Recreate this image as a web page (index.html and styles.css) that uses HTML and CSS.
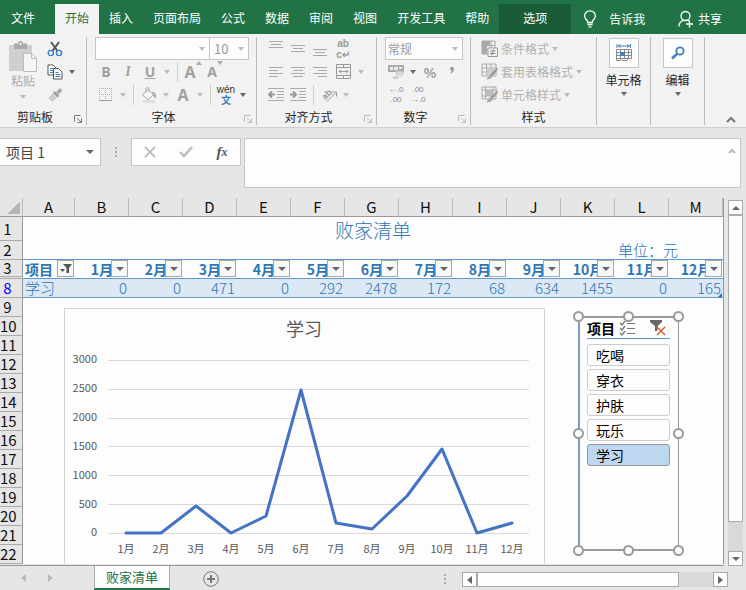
FILE: index.html
```html
<!DOCTYPE html>
<html lang="zh-CN">
<head>
    <meta charset="UTF-8">
    <title>败家清单</title>
    <link rel="stylesheet" href="styles.css">
</head>
<body>
    <div class="app">
        <nav class="tabs">
            <a class="tab file" href="#">文件</a>
            <a class="tab active" href="#">开始</a>
            <a class="tab" href="#">插入</a>
            <a class="tab" href="#">页面布局</a>
            <a class="tab" href="#">公式</a>
            <a class="tab" href="#">数据</a>
            <a class="tab" href="#">审阅</a>
            <a class="tab" href="#">视图</a>
            <a class="tab" href="#">开发工具</a>
            <a class="tab" href="#">帮助</a>
            <a class="tab context" href="#">选项</a>
            <a class="tell" href="#">
                <svg width="14" height="18" viewBox="0 0 14 18" fill="none" stroke="#fff" stroke-width="1.3"><path d="M4.5 12.5V11C3 9.500 1.600 8 1.600 6a5.400 5.200 0 0 1 10.800 0c0 2-1.400 3.500-2.900 5v1.500zM4.500 14.500h5M5.500 16.800h3"/></svg>
                告诉我
            </a>
            <a class="share" href="#">
                <svg width="16" height="18" viewBox="0 0 16 18" fill="none" stroke="#fff" stroke-width="1.300"><circle cx="7.500" cy="6" r="4.500"/><path d="M1 16.500c0-3.500 2-5.500 4.500-6.200M9.500 10.200l1.500 1M8 14h7M11.500 10.500v7"/></svg>
                共享
            </a>
        </nav>

        <div class="ribbon">
            <section class="group">
                <div class="clip">
                    <button class="paste" disabled>
                        <svg width="30" height="32" viewBox="0 0 30 32"><path d="M1 4h23v26H1z" fill="#d0cfd0"/><path d="M6 2.500h4a2.500 2.500 0 0 1 5 0h4V8H6z" fill="#aaa"/><circle cx="12.500" cy="3" r="1.200" fill="#f1f1f1"/><path d="M15.500 12.500h8l5 5v13h-13z" fill="#f6f6f6" stroke="#bbb"/><path d="M23.500 12.500v5h5" fill="none" stroke="#bbb"/></svg>
                        粘贴
                        <i class="caret pale"></i>
                    </button>
                    <div class="rows">
                        <div class="row"><button class="tool" aria-label="剪切"><svg width="16" height="16" viewBox="0 0 16 16" fill="none"><path d="M4 1l6.500 9M12 1L5.500 10" stroke="#555" stroke-width="2"/><circle cx="3.800" cy="12" r="2.600" stroke="#3f7fbf" stroke-width="1.400"/><circle cx="12" cy="12" r="2.600" stroke="#3f7fbf" stroke-width="1.400"/></svg></button></div>
                        <div class="row"><button class="tool" aria-label="复制"><svg width="16" height="16" viewBox="0 0 16 16" fill="none"><path d="M1 1h5l3 3v7H1z" fill="#fff" stroke="#555"/><path d="M3 4.500h3M3 6.500h3M3 8.500h3" stroke="#3f7fbf"/><path d="M6.500 4.500h5l3.500 3.500v7H6.500z" fill="#fff" stroke="#555"/><path d="M8.500 8.500h3M8.500 10.500h5M8.500 12.500h5" stroke="#3f7fbf"/></svg></button><button class="drop" aria-label="复制选项"><i class="caret"></i></button></div>
                        <div class="row"><button class="tool" aria-label="格式刷" disabled><svg width="16" height="16" viewBox="0 0 16 16"><path d="M13 1l2.500 2.500-4 4L9 5z" fill="#aaa"/><path d="M7.500 4l5 5-2 1.500-4.500-4.500z" fill="#999"/><path d="M5.500 6.500l4.500 4.500c-2 1.500-3.500 3-4.500 4L1 11C3 9.500 4.500 8 5.500 6.500z" fill="#ccc"/></svg></button></div>
                    </div>
                </div>
                <div class="caption"><span>剪贴板</span><button class="launch" aria-label="剪贴板设置"><svg width="8" height="8" viewBox="0 0 8 8" fill="none" stroke="#777"><path d="M.5 6.500v-6h6M3 3l4 4M7.500 3.500v4h-4"/></svg></button></div>
            </section>

            <section class="group">
                <div class="rows">
                    <div class="row">
                        <div class="combo font-name"><input type="text" aria-label="字体" disabled><i class="caret pale"></i></div>
                        <div class="combo font-size"><input type="text" aria-label="字号" value="10" disabled><i class="caret pale"></i></div>
                    </div>
                    <div class="row">
                        <button class="tool letter bold" disabled>B</button>
                        <button class="tool letter italic" disabled>I</button>
                        <button class="tool letter under" disabled>U</button>
                        <button class="drop" aria-label="下划线" disabled><i class="caret pale"></i></button>
                        <i class="sep"></i>
                        <button class="tool letter big" aria-label="增大字号" disabled>A<svg width="6" height="4" viewBox="0 0 6 4"><path d="M0 4l3-4 3 4z" fill="#aaa"/></svg></button>
                        <button class="tool letter" aria-label="减小字号" disabled>A<svg width="6" height="4" viewBox="0 0 6 4"><path d="M0 0l3 4 3-4z" fill="#aaa"/></svg></button>
                    </div>
                    <div class="row">
                        <button class="tool" aria-label="边框" disabled><svg width="14" height="14" viewBox="0 0 14 14" fill="none" stroke="#aaa"><path d="M.5 0v12M6.500 0v12M12.500 0v12M0 .5h13M0 6.500h13" stroke-dasharray="1 1"/><path d="M0 12.500h13" stroke="#999"/></svg></button>
                        <button class="drop" aria-label="边框选项" disabled><i class="caret pale"></i></button>
                        <i class="sep"></i>
                        <button class="tool" aria-label="填充颜色" disabled><svg width="16" height="16" viewBox="0 0 16 16" fill="none" stroke="#aaa"><path d="M6.500 2.500l6 5-5.500 5.500-5.500-5z" fill="#f6f6f6"/><path d="M5 6V2a1.500 1.500 0 0 1 3 0v3"/><path d="M11.500 5c3 1 3.500 3 3 6-1-1-2-2-2-3.500z" fill="#aaa"/><path d="M2 14.500h12" stroke="#ddd" stroke-width="3"/></svg></button>
                        <button class="drop" aria-label="填充选项" disabled><i class="caret pale"></i></button>
                        <button class="tool letter big" aria-label="字体颜色" disabled>A</button>
                        <button class="drop" aria-label="颜色选项" disabled><i class="caret pale"></i></button>
                        <i class="sep"></i>
                        <button class="tool pinyin" aria-label="拼音指南"><span>wén</span><b>文</b></button>
                        <button class="drop" aria-label="拼音选项"><i class="caret"></i></button>
                    </div>
                </div>
                <div class="caption"><span>字体</span><button class="launch" aria-label="字体设置"><svg width="8" height="8" viewBox="0 0 8 8" fill="none" stroke="#bbb"><path d="M.5 6.500v-6h6M3 3l4 4M7.500 3.500v4h-4"/></svg></button></div>
            </section>

            <section class="group">
                <div class="rows">
                    <div class="row">
                        <button class="tool" aria-label="顶端对齐" disabled><svg width="14" height="16" viewBox="0 0 14 16" stroke="#aaa"><path d="M0 .5h14M2 3.500h10M0 6.500h14"/></svg></button>
                        <button class="tool" aria-label="垂直居中" disabled><svg width="14" height="16" viewBox="0 0 14 16" stroke="#aaa"><path d="M0 4.500h14M2 7.500h10M0 10.500h14"/></svg></button>
                        <button class="tool" aria-label="底端对齐" disabled><svg width="14" height="16" viewBox="0 0 14 16" stroke="#aaa"><path d="M0 8.500h14M2 11.500h10M0 14.500h14"/></svg></button>
                        <button class="tool wide wrap" aria-label="自动换行" disabled><span>ab</span><span>c↵</span></button>
                    </div>
                    <div class="row">
                        <button class="tool" aria-label="左对齐" disabled><svg width="14" height="12" viewBox="0 0 14 12" stroke="#aaa"><path d="M0 1.500h14M0 4.500h9M0 7.500h14M0 10.500h9"/></svg></button>
                        <button class="tool" aria-label="居中" disabled><svg width="14" height="12" viewBox="0 0 14 12" stroke="#aaa"><path d="M0 1.500h14M2 4.500h10M0 7.500h14M2 10.500h10"/></svg></button>
                        <button class="tool" aria-label="右对齐" disabled><svg width="14" height="12" viewBox="0 0 14 12" stroke="#aaa"><path d="M0 1.500h14M5 4.500h9M0 7.500h14M5 10.500h9"/></svg></button>
                        <button class="tool wide" aria-label="合并" disabled><svg width="15" height="15" viewBox="0 0 15 15" fill="none" stroke="#999"><path d="M.5.500h14v14H.5zM.5 3.500h14M.5 11.500h14M7.500.500v3M7.500 11.500v3M3 7.500h9M5 5.500l-2 2 2 2M10 5.500l2 2-2 2"/></svg></button>
                        <button class="drop" aria-label="合并选项" disabled><i class="caret pale"></i></button>
                    </div>
                    <div class="row">
                        <button class="tool" aria-label="减少缩进" disabled><svg width="16" height="14" viewBox="0 0 16 14" fill="none" stroke="#aaa"><path d="M0 .5h16M9 3.500h7M9 6.500h7M9 9.500h7M0 12.500h16"/><path d="M1 6.500h6M4 3.500l-3 3 3 3" stroke="#999" stroke-width="2"/></svg></button>
                        <button class="tool" aria-label="增加缩进" disabled><svg width="16" height="14" viewBox="0 0 16 14" fill="none" stroke="#aaa"><path d="M0 .5h16M9 3.500h7M9 6.500h7M9 9.500h7M0 12.500h16"/><path d="M0 6.500h6M3 3.500l3 3-3 3" stroke="#999" stroke-width="2"/></svg></button>
                        <i class="sep"></i>
                        <button class="tool" aria-label="方向" disabled><svg class="slanted" width="17" height="17" viewBox="0 0 17 17" fill="none" stroke="#999"><text x="0" y="12" class="tilt" transform="rotate(-45 5 8)">ab</text><path d="M6 15.500l9-9M11 6h4.500v4.500"/></svg></button>
                        <button class="drop" aria-label="方向选项" disabled><i class="caret pale"></i></button>
                    </div>
                </div>
                <div class="caption"><span>对齐方式</span><button class="launch" aria-label="对齐设置"><svg width="8" height="8" viewBox="0 0 8 8" fill="none" stroke="#bbb"><path d="M.5 6.500v-6h6M3 3l4 4M7.500 3.500v4h-4"/></svg></button></div>
            </section>

            <section class="group">
                <div class="rows">
                    <div class="row">
                        <div class="combo format"><input type="text" aria-label="数字格式" value="常规" disabled><i class="caret pale"></i></div>
                    </div>
                    <div class="row">
                        <button class="tool" aria-label="货币" disabled><svg width="16" height="16" viewBox="0 0 16 16"><path d="M0 1h16v7H0z" fill="#aaa"/><path d="M2 3h3v3H2zM11 3h3v2h-3z" fill="#eee"/><circle cx="8" cy="4.500" r="2" fill="#eee"/><ellipse cx="11.500" cy="8.500" rx="4" ry="1.500" fill="#ddd" stroke="#bbb"/><ellipse cx="11.500" cy="11" rx="4" ry="1.500" fill="#ddd"/><ellipse cx="7.500" cy="13.500" rx="3" ry="1.500" fill="#ccc"/></svg></button>
                        <button class="drop" aria-label="货币选项"><i class="caret"></i></button>
                        <button class="tool letter percent" disabled>%</button>
                        <button class="tool" aria-label="千位分隔" disabled><svg width="6" height="12" viewBox="0 0 6 12"><path d="M1 2.500a2 2 0 1 1 4 .5c0 2-1.500 4-3 4.500l-.500-1C2.500 6 3 5.200 3 4.500 1.800 4.500 1 3.800 1 2.500z" fill="#999"/></svg></button>
                    </div>
                    <div class="row">
                        <button class="tool digits" aria-label="增加小数位" disabled><span>←.0</span><span>.00</span></button>
                        <button class="tool digits" aria-label="减少小数位" disabled><span>.00</span><span>→.0</span></button>
                    </div>
                </div>
                <div class="caption"><span>数字</span><button class="launch" aria-label="数字设置"><svg width="8" height="8" viewBox="0 0 8 8" fill="none" stroke="#bbb"><path d="M.5 6.500v-6h6M3 3l4 4M7.500 3.500v4h-4"/></svg></button></div>
            </section>

            <section class="group">
                <div class="rows">
                    <div class="row"><button class="style" disabled><svg width="17" height="17" viewBox="0 0 17 17" fill="none"><path d="M1 1h13v13H1zM1 5.500h13M1 10h13M5.500 1v13M10 1v13" stroke="#aaa"/><path d="M1 1h8v4H1zM1 6h4v4H1zM1 10h5v4H1z" fill="#aaa"/><path d="M7 8h9.500v8.500H7z" fill="#f6f6f6" stroke="#999"/><path d="M9 11h5.500M9 13.500h5.500M13 9.500l-2.500 6" stroke="#888"/></svg>条件格式<i class="caret pale"></i></button></div>
                    <div class="row"><button class="style" disabled><svg width="17" height="17" viewBox="0 0 17 17" fill="none"><path d="M1 1h14v12H1zM1 5h14M1 9h14M5.500 1v12M10 1v12" stroke="#aaa"/><path d="M5.500 5H15v8H5.500z" fill="#ccc"/><path d="M16.500 4v3l-5 6-2.500-1z" fill="#999"/><path d="M9 11.500l2.500 2c-1 2.500-3 3-6.500 2.500 2-1 2.500-3 4-4.500z" fill="#aaa"/></svg>套用表格格式<i class="caret pale"></i></button></div>
                    <div class="row"><button class="style" disabled><svg width="17" height="17" viewBox="0 0 17 17" fill="none"><path d="M1 1h14v12H1zM1 4h14M1 10h14M4.500 1v12M12 1v12" stroke="#aaa"/><path d="M4.500 4H12v6H4.500z" fill="#bbb"/><path d="M16.500 4v3l-5 6-2.500-1z" fill="#999"/><path d="M9 11.500l2.500 2c-1 2.500-3 3-6.500 2.500 2-1 2.500-3 4-4.500z" fill="#aaa"/></svg>单元格样式<i class="caret pale"></i></button></div>
                </div>
                <div class="caption"><span>样式</span></div>
            </section>

            <section class="group">
                <button class="large">
                    <span class="box"><svg width="16" height="18" viewBox="0 0 16 18" fill="none"><path d="M1 0v4M14.500 0v4M2 2h12M4.500.500L2.500 2l2 1.500M11 .5L13 2l-2 1.500" stroke="#3f7fbf"/><path d="M.5 5.500h15v9H.5zM.5 8.500h15M.5 11.500h15M4.500 5.500v9M8.500 5.500v9M12.500 5.500v9M.5 14.500v2h4l1-2M6 16.500h5l1-2" stroke="#888"/><path d="M4 8h5v4H4z" fill="#3f7fbf"/></svg></span>
                    单元格
                    <i class="caret"></i>
                </button>
            </section>

            <section class="group">
                <button class="large">
                    <span class="box"><svg width="14" height="14" viewBox="0 0 14 14" fill="none" stroke="#3f7fbf"><circle cx="9" cy="5" r="3.700" stroke-width="1.800"/><path d="M6 8l-5 4.500" stroke-width="2.500"/></svg></span>
                    编辑
                    <i class="caret"></i>
                </button>
            </section>

            <div class="fold">
                <button aria-label="折叠功能区"><svg width="10" height="7" viewBox="0 0 10 7" fill="none" stroke="#777" stroke-width="2"><path d="M1 6l4-4 4 4"/></svg></button>
            </div>
        </div>

        <div class="formula-bar">
            <div class="name-box"><input type="text" aria-label="名称框" value="项目 1"><i class="caret large-caret"></i></div>
            <i class="dots"></i>
            <div class="fx">
                <button aria-label="取消"><svg width="12" height="12" viewBox="0 0 12 12" stroke="#bbb" stroke-width="1.800"><path d="M1 1l10 10M11 1L1 11"/></svg></button>
                <button aria-label="输入"><svg width="14" height="12" viewBox="0 0 14 12" fill="none" stroke="#bbb" stroke-width="2.400"><path d="M1 6l4 4 8-9"/></svg></button>
                <button class="fn">f<small>x</small></button>
            </div>
            <div class="formula">
                <textarea aria-label="编辑栏"></textarea>
                <svg width="8" height="6" viewBox="0 0 8 6" fill="none" stroke="#bbb" stroke-width="2"><path d="M1 5l3-3 3 3"/></svg>
            </div>
        </div>

        <main class="workspace">
            <div class="sheet">
                <table>
                    <colgroup><col class="col-head"><col class="col-a"><col span="12"></colgroup>
                    <thead>
                        <tr><th class="corner"></th><th>A</th><th>B</th><th>C</th><th>D</th><th>E</th><th>F</th><th>G</th><th>H</th><th>I</th><th>J</th><th>K</th><th>L</th><th>M</th></tr>
                    </thead>
                    <tbody>
                        <tr class="title"><th>1</th><td colspan="13">败家清单</td></tr>
                        <tr class="unit"><th>2</th><td colspan="11"></td><td colspan="2">单位：元</td></tr>
                        <tr class="months">
                            <th class="before-hidden">3</th>
                            <td>项目<button class="filter" aria-label="筛选项目"><svg width="12" height="10" viewBox="0 0 12 10"><path d="M3 0h9L9 4v5H6.500V4z" fill="#555"/><path d="M0 5h5L2.500 8z" fill="#555"/></svg></button></td>
                            <td>1月<button class="filter" aria-label="筛选1月"><i class="caret large-caret"></i></button></td>
                            <td>2月<button class="filter" aria-label="筛选2月"><i class="caret large-caret"></i></button></td>
                            <td>3月<button class="filter" aria-label="筛选3月"><i class="caret large-caret"></i></button></td>
                            <td>4月<button class="filter" aria-label="筛选4月"><i class="caret large-caret"></i></button></td>
                            <td>5月<button class="filter" aria-label="筛选5月"><i class="caret large-caret"></i></button></td>
                            <td>6月<button class="filter" aria-label="筛选6月"><i class="caret large-caret"></i></button></td>
                            <td>7月<button class="filter" aria-label="筛选7月"><i class="caret large-caret"></i></button></td>
                            <td>8月<button class="filter" aria-label="筛选8月"><i class="caret large-caret"></i></button></td>
                            <td>9月<button class="filter" aria-label="筛选9月"><i class="caret large-caret"></i></button></td>
                            <td>10月<button class="filter" aria-label="筛选10月"><i class="caret large-caret"></i></button></td>
                            <td>11月<button class="filter" aria-label="筛选11月"><i class="caret large-caret"></i></button></td>
                            <td>12月<button class="filter" aria-label="筛选12月"><i class="caret large-caret"></i></button></td>
                        </tr>
                        <tr class="data"><th>8</th><td>学习</td><td>0</td><td>0</td><td>471</td><td>0</td><td>292</td><td>2478</td><td>172</td><td>68</td><td>634</td><td>1455</td><td>0</td><td class="last">165</td></tr>
                        <tr><th>9</th><td colspan="13"></td></tr>
                        <tr><th>10</th><td colspan="13"></td></tr>
                        <tr><th>11</th><td colspan="13"></td></tr>
                        <tr><th>12</th><td colspan="13"></td></tr>
                        <tr><th>13</th><td colspan="13"></td></tr>
                        <tr><th>14</th><td colspan="13"></td></tr>
                        <tr><th>15</th><td colspan="13"></td></tr>
                        <tr><th>16</th><td colspan="13"></td></tr>
                        <tr><th>17</th><td colspan="13"></td></tr>
                        <tr><th>18</th><td colspan="13"></td></tr>
                        <tr><th>19</th><td colspan="13"></td></tr>
                        <tr><th>20</th><td colspan="13"></td></tr>
                        <tr><th>21</th><td colspan="13"></td></tr>
                        <tr><th>22</th><td colspan="13"></td></tr>
                    </tbody>
                </table>

                <!-- objects floating over the cells -->
                <svg class="chart" width="481" height="256" viewBox="0 0 481 256">
                    <rect x="0.5" y="0.5" width="480" height="280" fill="#fdfdfd" stroke="#d4d4d4"/>
                    <text class="chart-title" x="240" y="28">学习</text>
                    <path class="gridlines" d="M44 52.500h421M44 81.500h421M44 110.500h421M44 138.500h421M44 167.500h421M44 196.500h421M44 225.500h421"/>
                    <g class="y-axis">
                        <text x="33" y="55">3000</text><text x="33" y="84">2500</text><text x="33" y="113">2000</text><text x="33" y="142">1500</text><text x="33" y="171">1000</text><text x="33" y="200">500</text><text x="33" y="228">0</text>
                    </g>
                    <g class="x-axis">
                        <text x="62" y="245">1月</text><text x="97" y="245">2月</text><text x="132" y="245">3月</text><text x="167" y="245">4月</text><text x="202" y="245">5月</text><text x="237" y="245">6月</text><text x="272" y="245">7月</text><text x="308" y="245">8月</text><text x="343" y="245">9月</text><text x="378" y="245">10月</text><text x="413" y="245">11月</text><text x="448" y="245">12月</text>
                    </g>
                    <polyline class="series" points="62,225 97,225 132,198 167,225 202,208 237,82 272,215 308,221 343,188 378,141 413,225 448,215"/>
                </svg>

                <div class="slicer">
                    <div class="slicer-head">
                        <b>项目</b>
                        <button aria-label="多选"><svg width="17" height="15" viewBox="0 0 17 15" fill="none" stroke="#777"><path d="M1 2l2 2 3-4M1 7l2 2 3-4M1 12l2 2 3-4" stroke-width="1.300"/><path d="M8 2.500h8M8 7.500h8M8 12.500h8"/></svg></button>
                        <button class="clear" aria-label="清除筛选器"><svg width="16" height="16" viewBox="0 0 16 16" fill="none"><path d="M0 0h12v2L7.500 6v5H5V6L0 2z" fill="#666"/><path d="M7 7l8 8M15 7l-8 8" stroke="#d9532c" stroke-width="1.400"/></svg></button>
                    </div>
                    <button class="item">吃喝</button>
                    <button class="item">穿衣</button>
                    <button class="item">护肤</button>
                    <button class="item">玩乐</button>
                    <button class="item selected">学习</button>
                    <i class="grip top left"></i><i class="grip top mid"></i><i class="grip top right"></i>
                    <i class="grip center left"></i><i class="grip center right"></i>
                    <i class="grip base left"></i><i class="grip base mid"></i><i class="grip base right"></i>
                </div>
            </div>

            <div class="v-scroll">
                <button aria-label="向上"><i class="caret up"></i></button>
                <div class="thumb"></div>
                <div class="track"></div>
                <button aria-label="向下"><i class="caret large-caret"></i></button>
            </div>
        </main>

        <footer class="bottom-bar">
            <div class="sheet-nav">
                <button aria-label="上一张"><i class="caret back pale"></i></button>
                <button aria-label="下一张"><i class="caret next pale"></i></button>
            </div>
            <a class="sheet-tab" href="#">败家清单</a>
            <button class="add" aria-label="新工作表"><svg width="16" height="16" viewBox="0 0 16 16" fill="none" stroke="#777"><circle cx="8" cy="8" r="7.300"/><path d="M4 8h8M8 4v8" stroke-width="2"/></svg></button>
            <i class="dots"></i>
            <div class="h-scroll">
                <button aria-label="向左"><i class="caret back"></i></button>
                <div class="thumb"></div>
                <div class="track"></div>
                <button aria-label="向右"><i class="caret next"></i></button>
            </div>
        </footer>
    </div>
</body>
</html>
```
FILE: styles.css
```css
*{
    box-sizing: border-box;
    margin: 0;
    padding: 0;
}

body {
    background-color: #e6e6e6;
    font-family: "Noto Sans CJK SC", sans-serif;
    font-size: 12px;
    line-height: 16px;
    color: #262626;
}

button,
input,
textarea {
    font: inherit;
    color: inherit;
    border: none;
    background: none;
    outline: none;
}

button {
    display: flex;
    align-items: center;
    justify-content: center;
}

a {
    color: white;
    text-decoration: none;
}

svg {
    display: block;
    flex: none;
}

.app {
    display: flex;
    flex-direction: column;
    min-height: 100vh;
}

.caret {
    flex: none;
    border: 3px solid transparent;
    border-top: 4px solid #666;
    border-bottom: none;
}

.caret.large-caret {
    border-right-width: 4px;
    border-left-width: 4px;
}

.caret.pale {
    border-top-color: #bbb;
}

.caret.up {
    border: 4px solid transparent;
    border-top: none;
    border-bottom: 4px solid #666;
}

.caret.back {
    border: 4px solid transparent;
    border-right: 5px solid #666;
    border-left: none;
}

.caret.next {
    border: 4px solid transparent;
    border-left: 5px solid #666;
    border-right: none;
}

.caret.back.pale {
    border-right-color: #bbb;
}

.caret.next.pale {
    border-left-color: #bbb;
}

/* tabs */

.tabs {
    display: flex;
    height: 34px;
    padding-top: 4px;
    background: #217346;
}

.tab {
    padding: 6px 10px;
    white-space: nowrap;
}

.tab.file {
    padding-right: 20px;
    padding-left: 11px;
}

.tab.active {
    background: #f3f3f3;
    color: #217346;
}

.tab.context {
    padding: 6px 24px;
    background: #1a5c38;
}

.tell,
.share {
    display: flex;
    align-items: center;
    gap: 12px;
    padding-left: 12px;
    white-space: nowrap;
}

.share {
    gap: 4px;
    margin-left: auto;
    padding-right: 24px;
}

/* ribbon */

.ribbon {
    display: grid;
    grid-template-columns: 87px 170px 120px 94px 126px 54px 54px 1fr;
    padding: 3px 0 2px;
    background: #f2f2f2;
    border-bottom: 1px solid #d0d0d0;
}

.group {
    display: flex;
    flex-direction: column;
    gap: 3px;
    padding-left: 8px;
    border-right: 1px solid #bbb;
}

.row {
    display: flex;
    align-items: center;
    height: 23px;
}

.tool {
    width: 22px;
    height: 22px;
}

.tool.wide {
    width: 24px;
}

.drop {
    width: 12px;
    height: 22px;
}

.sep {
    width: 1px;
    height: 20px;
    margin: 0 4px;
    background: #ccc;
}

.letter {
    font: bold 14px "Open Sans", sans-serif;
    color: #a0a0a0;
}

.letter svg {
    align-self: flex-start;
}

.letter.big {
    font-size: 16px;
}

.italic {
    font-family: "Liberation Serif", serif;
    font-style: italic;
}

.under {
    text-decoration: underline;
}

.percent {
    font-size: 15px;
    font-weight: 600;
}

.pinyin,
.wrap,
.digits {
    flex-direction: column;
    font: 10px/11px "Liberation Sans", sans-serif;
    color: #333;
}

.pinyin b {
    font: bold 10px/10px "Noto Sans CJK SC", sans-serif;
    color: #3f7fbf;
}

.wrap {
    font-weight: bold;
    color: #999;
}

.digits {
    font-size: 8px;
    line-height: 10px;
    color: #888;
}

.slanted {
    overflow: visible;
}

.tilt {
    font: bold 9px "Liberation Sans", sans-serif;
    fill: #999;
    stroke: none;
}

.combo {
    display: flex;
    align-items: center;
    height: 23px;
    padding: 0 4px;
    background: #fdfdfd;
    border: 1px solid #c6c6c6;
    color: #999;
}

.combo input {
    flex: 1;
    min-width: 0;
}

.font-name {
    width: 115px;
}

.font-size {
    width: 39px;
    border-left: none;
}

.font-size input {
    font-size: 13px;
}

.format {
    width: 78px;
    padding-left: 2px;
}

.caption {
    display: flex;
    align-items: center;
}

.caption span {
    flex: 1;
    margin-left: -8px;
    text-align: center;
}

.launch {
    width: 16px;
    height: 16px;
    padding-top: 4px;
}

.clip {
    display: flex;
}

.paste {
    flex-direction: column;
    justify-content: flex-start;
    width: 30px;
    padding-top: 4px;
    color: #aaa;
}

.paste .caret {
    margin-top: 6px;
}

.clip .rows {
    margin-left: 6px;
}

.style {
    gap: 3px;
    padding-left: 2px;
    color: #b0b0b0;
}

.large {
    flex-direction: column;
    gap: 4px;
    margin-left: -8px;
    padding-top: 1px;
}

.box {
    display: grid;
    place-items: center;
    width: 30px;
    height: 30px;
    background: #fdfdfd;
    border: 1px solid #c6c6c6;
}

.fold {
    display: flex;
    align-items: flex-end;
    justify-content: flex-end;
    padding: 0 10px 2px 0;
}

/* formula bar */

.formula-bar {
    display: flex;
    align-items: flex-start;
    padding: 10px 5px 10px 0;
}

.name-box,
.fx,
.formula {
    display: flex;
    align-items: center;
    height: 28px;
    background: #fdfdfd;
    border: 1px solid #c6c6c6;
}

.name-box {
    width: 101px;
    padding: 0 6px;
    border-left: none;
}

.name-box input {
    flex: 1;
    min-width: 0;
    font-size: 14px;
    color: #444;
}

.dots {
    width: 2px;
    height: 10px;
    margin: 9px 14px;
    background: repeating-linear-gradient(#aaa 0 2px, transparent 2px 4px);
}

.fx {
    width: 110px;
}

.fx button {
    flex: 1;
    height: 26px;
}

.fn {
    font: italic bold 15px "Liberation Serif", serif;
    color: #555;
}

.fn small {
    font-size: 12px;
}

.formula {
    flex: 1;
    align-items: flex-start;
    height: 50px;
    margin-left: 3px;
    padding: 4px;
}

.formula textarea {
    flex: 1;
    height: 40px;
    resize: none;
}

.formula svg {
    margin-top: 5px;
}

/* sheet */

.workspace {
    display: flex;
    flex: 1;
}

.sheet {
    position: relative;
    flex: 1;
    border-bottom: 1px solid #999;
}

table {
    width: 100%;
    table-layout: fixed;
    border-spacing: 0;
    font-size: 15px;
    line-height: 18px;
    border-right: 1px solid #999;
}

.col-head {
    width: 23px;
}

.col-a {
    width: 52px;
}

th {
    font-weight: normal;
    color: #111;
}

thead th {
    height: 19px;
    border-right: 1px solid #bbb;
    border-bottom: 1px solid #999;
    background: #e6e6e6;
}

.corner {
    background: linear-gradient(135deg, transparent 50%, #b5b5b5 50%) 8px 4px / 12px 12px no-repeat;
}

tbody th {
    height: 19px;
    padding-right: 7px;
    border-right: 1px solid #999;
    border-bottom: 1px solid #aaa;
    background: #e6e6e6;
    white-space: nowrap;
}

tbody th.before-hidden {
    border-bottom: 3px double #aaa;
    line-height: 16px;
}

td {
    position: relative;
    background: #fdfdfd;
    color: #2e75b6;
    white-space: nowrap;
    font-weight: 300;
}

.title th,
.title td {
    height: 24px;
}

.title td {
    font-size: 19px;
    line-height: 23px;
    text-align: center;
}

.unit td {
    padding-left: 3px;
    border-bottom: 1px solid #5b9bd5;
}

.months td {
    font-weight: bold;
    font-size: 14px;
    text-align: center;
    border-bottom: 1px solid #5b9bd5;
}

.months td:nth-child(2),
.data td:nth-child(2) {
    padding-left: 2px;
    text-align: left;
}

.filter {
    position: absolute;
    top: 0;
    right: 1px;
    width: 17px;
    height: 17px;
    background: #f6f8fa;
    border: 1px solid #a6a6a6;
}

.data th {
    color: #0000ff;
}

.data td {
    padding-right: 2px;
    background: #dce9f5;
    border-bottom: 1px solid #5b9bd5;
    text-align: right;
}

.data .last::after {
    content: "";
    position: absolute;
    right: 1px;
    bottom: 0;
    border: 2px solid #3f5fbf;
    border-top-color: transparent;
    border-left-color: transparent;
}

/* chart */

.chart {
    position: absolute;
    top: 110px;
    left: 64px;
    font-size: 11px;
    fill: #595959;
}

.chart-title {
    font-size: 18px;
    text-anchor: middle;
}

.gridlines {
    stroke: #d9d9d9;
}

.y-axis {
    text-anchor: end;
}

.x-axis {
    text-anchor: middle;
}

.series {
    fill: none;
    stroke: #4472c4;
    stroke-width: 3;
    stroke-linejoin: round;
    stroke-linecap: round;
}

/* slicer */

.slicer {
    position: absolute;
    top: 118px;
    left: 578px;
    display: flex;
    flex-direction: column;
    gap: 3px;
    width: 101px;
    height: 235px;
    padding: 0 8px 0 7px;
    background: #fdfdfd;
    border: 2px solid #999;
    border-right-width: 1px;
    border-left-color: #7b9cbd;
    font-size: 14px;
}

.slicer-head {
    display: flex;
    align-items: center;
    height: 21px;
    margin-bottom: 2px;
    border-bottom: 1px solid #5b9bd5;
}

.slicer-head b {
    color: #000;
}

.slicer-head button {
    margin-left: 4px;
}

.slicer-head .clear {
    margin-left: auto;
    margin-right: 4px;
}

.item {
    justify-content: flex-start;
    height: 22px;
    padding-left: 8px;
    border: 1px solid #ccc;
    border-radius: 3px;
    color: #000;
}

.item.selected {
    background: #bdd7ee;
    border-color: #999;
}

.grip {
    position: absolute;
    width: 11px;
    height: 11px;
    background: #fdfdfd;
    border: 2px solid #999;
    border-radius: 50%;
}

.grip.top {
    top: -7px;
}

.grip.center {
    top: 110px;
}

.grip.base {
    bottom: -7px;
}

.grip.left {
    left: -7px;
}

.grip.mid {
    left: 43px;
}

.grip.right {
    right: -6px;
}

/* scroll bars */

.v-scroll {
    display: flex;
    flex-direction: column;
    width: 22px;
    padding: 2px 3px 0 4px;
}

.v-scroll button,
.h-scroll button {
    width: 15px;
    height: 15px;
    background: #fdfdfd;
    border: 1px solid #aaa;
}

.thumb {
    flex: 1;
    background: #fdfdfd;
    border: 1px solid #aaa;
}

.v-scroll .track {
    height: 29px;
    background: #d9d9d9;
}

.bottom-bar {
    display: flex;
    align-items: flex-start;
    height: 24px;
}

.sheet-nav {
    display: flex;
    gap: 22px;
    width: 94px;
    padding: 8px 21px 0;
}

.sheet-tab {
    height: 24px;
    padding: 3px 11px;
    background: #fdfdfd;
    border: 1px solid #aaa;
    border-top: none;
    border-bottom: 2px solid #217346;
    font-size: 13px;
    color: #217346;
}

.add {
    margin: 5px 0 0 33px;
}

.bottom-bar .dots {
    margin: 8px 14px 0 auto;
}

.h-scroll {
    display: flex;
    width: 266px;
    margin: 6px 18px 0 2px;
}

.h-scroll .track {
    width: 34px;
    background: #d9d9d9;
}
```
